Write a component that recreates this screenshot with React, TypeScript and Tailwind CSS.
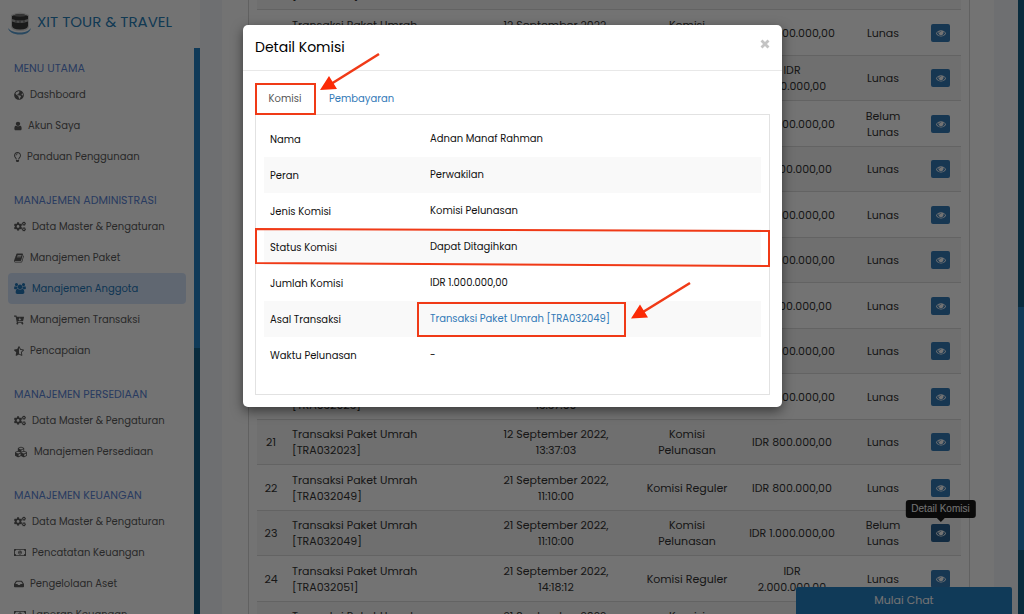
import React from "react";
import {
  FaCartArrowDown,
  FaCogs,
  FaCubes,
  FaGlobeAmericas,
  FaInbox,
  FaRegLightbulb,
  FaRegMoneyBillAlt,
  FaStarHalfAlt,
} from "react-icons/fa";

type IconProps = { className?: string };

function UserIcon({ className }: IconProps) {
  return (
    <svg viewBox="192 64 1408 1664" className={className} fill="currentColor" aria-hidden="true">
      <path d="M1536 1399q0 109-62.5 187t-150.5 78h-854q-88 0-150.5-78t-62.5-187q0-85 8.5-160.5t31.5-152 58.5-131 94-89 134.5-34.5q131 128 313 128t313-128q76 0 134.5 34.5t94 89 58.5 131 31.5 152 8.5 160.5zm-256-887q0 159-112.5 271.5t-271.5 112.5-271.5-112.5-112.5-271.5 112.5-271.5 271.5-112.5 271.5 112.5 112.5 271.5z" />
    </svg>
  );
}

function GroupIcon({ className }: IconProps) {
  return (
    <svg viewBox="-64 0 1920 1792" className={className} fill="currentColor" aria-hidden="true">
      <path d="M529 896q-162 5-265 128h-134q-82 0-138-40.5t-56-118.5q0-353 124-353 6 0 43.5 21t97.5 42.5 119 21.5q67 0 133-23-5 37-5 66 0 139 81 256zm1071 637q0 120-73 189.5t-194 69.5h-874q-121 0-194-69.5t-73-189.5q0-53 3.5-103.5t14-109 26.5-108.500 43-97.500 62-81 85.5-53.500 111.5-20q10 0 43 21.500t73 48 107 48 135 21.500 135-21.500 107-48 73-48 43-21.500q61 0 111.500 20t85.500 53.500 62 81 43 97.500 26.500 108.500 14 109 3.500 103.500zm-1024-1277q0 106-75 181t-181 75-181-75-75-181 75-181 181-75 181 75 75 181zm704 384q0 159-112.500 271.500t-271.500 112.500-271.500-112.500-112.500-271.500 112.500-271.500 271.500-112.500 271.500 112.500 112.500 271.500zm576 225q0 78-56 118.500t-138 40.500h-134q-103-123-265-128 81-117 81-256 0-29-5-66 66 23 133 23 59 0 119-21.500t97.500-42.500 43.500-21q124 0 124 353zm-128-609q0 106-75 181t-181 75-181-75-75-181 75-181 181-75 181 75 75 181z" />
    </svg>
  );
}

function BookIcon({ className }: IconProps) {
  return (
    <svg viewBox="60 64 1680 1664" className={className} fill="currentColor" aria-hidden="true">
      <path d="M1703 478q40 57 18 129l-275 906q-19 64-76.5 107.5t-122.5 43.5h-923q-77 0-148.5-53.5t-99.5-131.5q-24-67-2-127 0-4 3-27t4-37q1-8-3-21.5t-3-19.5q2-11 8-21t16.5-23.5 16.500-23.5q23-38 45-91.5t30-91.5q3-10 .5-30t-.5-28q3-11 17-28t17-23q21-36 42-92t25-90q1-9-2.5-32t.5-28q4-13 22-30.5t22-22.5q19-26 42.5-84.500t27.5-96.5q1-8-3-25.5t-2-26.5q2-8 9-18t18-23 17-21q8-12 16.5-30.500t15-35 16-36 19.5-32 26.500-23.500 36-11.500 47.500 5.500l-1 3q38-9 51-9h761q74 0 114 56t18 130l-274 906q-36 119-71.500 153.500t-128.500 34.500h-869q-27 0-38 15-11 16-1 43 24 70 144 70h923q29 0 56-15.500t35-41.500l300-987q7-22 5-57 38 15 59 43zm-1064 2q-4 13 2 22.500t20 9.500h608q13 0 25.500-9.500t16.500-22.500l21-64q4-13-2-22.500t-20-9.500h-608q-13 0-25.500 9.500t-16.500 22.500zm-83 256q-4 13 2 22.500t20 9.500h608q13 0 25.500-9.500t16.500-22.500l21-64q4-13-2-22.500t-20-9.500h-608q-13 0-25.500 9.500t-16.500 22.500z" />
    </svg>
  );
}

function EyeIcon({ className }: IconProps) {
  return (
    <svg viewBox="0 0 1792 1792" className={className} fill="currentColor" aria-hidden="true">
      <path d="M1664 960q-152-236-381-353 61 104 61 225 0 185-131.5 316.5t-316.5 131.5-316.5-131.5-131.5-316.5q0-121 61-225-229 117-381 353 133 205 333.5 326.5t434.5 121.5 434.5-121.5 333.5-326.5zm-720-384q0-20-14-34t-34-14q-125 0-214.5 89.5t-89.5 214.5q0 20 14 34t34 14 34-14 14-34q0-86 61-147t147-61q20 0 34-14t14-34zm848 384q0 34-20 69-140 230-376.5 368.5t-499.5 138.5-499.5-139-376.5-368q-20-35-20-69t20-69q140-229 376.5-368t499.5-139 499.5 139 376.5 368q20 35 20 69z" />
    </svg>
  );
}

function Logo() {
  return (
    <svg viewBox="0 0 24 24" className="size-6 shrink-0" aria-hidden="true">
      <path d="M3 4Q12 -1 21 4V16Q20 20 12 20T3 16Z" fill="#d8d8d8" />
      <path d="M0 17C1 21 5 23.500 12 23.500S22 21 23 17C20 20.500 17 21.500 12 21.500S3 20.500 0 17Z" fill="#5a9fd4" />
      <path d="M4 5Q12 1 20 5V14.500Q20 18.500 12 18.500T4 14.500Z" fill="#3a3a3a" />
      <path d="M5 4.500Q12 1.500 19 4.500Q12 7 5 4.500Z" fill="#777" />
      <path d="M4 8Q12 11 20 8V10.500Q12 13.500 4 10.500Z" fill="#a8a8a8" />
      <path d="M8 9.300V11.700M12 10V12.300M16 9.300V11.700" stroke="#555" strokeWidth="1" />
    </svg>
  );
}

type MenuItem = { label: string; icon: React.ComponentType<IconProps>; size: string; active?: boolean };

const WIDE = "h-[11px] w-3";
const MID = "size-[10px]";

const sections: { title: string; items: MenuItem[] }[] = [
  {
    title: "MENU UTAMA",
    items: [
      { label: "Dashboard", icon: FaGlobeAmericas, size: MID },
      { label: "Akun Saya", icon: UserIcon, size: "h-[10px] w-2" },
      { label: "Panduan Penggunaan", icon: FaRegLightbulb, size: "h-[10px] w-[7px]" },
    ],
  },
  {
    title: "MANAJEMEN ADMINISTRASI",
    items: [
      { label: "Data Master & Pengaturan", icon: FaCogs, size: WIDE },
      { label: "Manajemen Paket", icon: BookIcon, size: MID },
      { label: "Manajemen Anggota", icon: GroupIcon, size: WIDE, active: true },
      { label: "Manajemen Transaksi", icon: FaCartArrowDown, size: MID },
      { label: "Pencapaian", icon: FaStarHalfAlt, size: MID },
    ],
  },
  {
    title: "MANAJEMEN PERSEDIAAN",
    items: [
      { label: "Data Master & Pengaturan", icon: FaCogs, size: WIDE },
      { label: "Manajemen Persediaan", icon: FaCubes, size: "h-3 w-[14px]" },
    ],
  },
  {
    title: "MANAJEMEN KEUANGAN",
    items: [
      { label: "Data Master & Pengaturan", icon: FaCogs, size: WIDE },
      { label: "Pencatatan Keuangan", icon: FaRegMoneyBillAlt, size: WIDE },
      { label: "Pengelolaan Aset", icon: FaInbox, size: MID },
      { label: "Laporan Keuangan", icon: FaRegMoneyBillAlt, size: WIDE },
    ],
  },
];

type Row = {
  no: number;
  code: string;
  date: string;
  time: string;
  type: string[];
  amount: string[];
  status: string[];
};

const PEL = ["Komisi", "Pelunasan"];
const REG = ["Komisi Reguler"];
const M1 = ["IDR 1.000.000,00"];
const M8 = ["IDR 800.000,00"];
const M2 = ["IDR", "2.000.000,00"];
const LUNAS = ["Lunas"];
const BELUM = ["Belum", "Lunas"];
const D12 = "12 September 2022,";
const D21 = "21 September 2022,";

const rows: Row[] = [
  { no: 11, code: "TRA032019", date: D12, time: "13:37:00", type: REG, amount: M1, status: LUNAS },
  { no: 12, code: "TRA032020", date: D12, time: "13:37:00", type: PEL, amount: M1, status: LUNAS },
  { no: 13, code: "TRA032020", date: D12, time: "13:37:00", type: REG, amount: M2, status: LUNAS },
  { no: 14, code: "TRA032021", date: D12, time: "13:37:00", type: PEL, amount: M1, status: BELUM },
  { no: 15, code: "TRA032021", date: D12, time: "13:37:00", type: REG, amount: M8, status: LUNAS },
  { no: 16, code: "TRA032021", date: D12, time: "13:37:00", type: PEL, amount: M1, status: LUNAS },
  { no: 17, code: "TRA032022", date: D12, time: "13:37:00", type: REG, amount: M1, status: LUNAS },
  { no: 18, code: "TRA032022", date: D12, time: "13:37:00", type: PEL, amount: M8, status: LUNAS },
  { no: 19, code: "TRA032022", date: D12, time: "13:37:00", type: REG, amount: M1, status: LUNAS },
  { no: 20, code: "TRA032023", date: D12, time: "13:37:00", type: REG, amount: M1, status: LUNAS },
  { no: 21, code: "TRA032023", date: D12, time: "13:37:03", type: PEL, amount: M8, status: LUNAS },
  { no: 22, code: "TRA032049", date: D21, time: "11:10:00", type: REG, amount: M8, status: LUNAS },
  { no: 23, code: "TRA032049", date: D21, time: "11:10:00", type: PEL, amount: M1, status: BELUM },
  { no: 24, code: "TRA032051", date: D21, time: "14:18:12", type: REG, amount: M2, status: LUNAS },
  { no: 25, code: "TRA032051", date: D21, time: "14:18:12", type: PEL, amount: M1, status: LUNAS },
];

function Lines({ lines }: { lines: string[] }) {
  return (
    <>
      {lines.map((line) => (
        <span key={line} className="block whitespace-nowrap">
          {line}
        </span>
      ))}
    </>
  );
}

function Sidebar() {
  return (
    <aside className="flex h-full w-[200px] shrink-0 flex-col bg-white">
      <a href="#beranda" className="flex h-12 shrink-0 items-center gap-[5px] pb-[3px] pl-2 text-[15px] whitespace-nowrap text-[#2980b9]">
        <Logo />
        XIT TOUR &amp; TRAVEL
      </a>
      <div className="flex min-h-0 flex-1">
        <nav className="min-w-0 flex-1 overflow-hidden pr-2 pl-2">
          {sections.map((section) => (
            <section key={section.title} className="pt-5 first:pt-3">
              <h2 className="mb-[3px] pl-[6px] text-[11px] leading-4 whitespace-nowrap text-[#5b84d6]">{section.title}</h2>
              <ul>
                {section.items.map((item) => (
                  <li key={item.label}>
                    <a
                      href="#menu"
                      className={
                        "flex h-[31px] items-center gap-[6px] rounded pl-[6px] text-[10px] whitespace-nowrap " +
                        (item.active ? "bg-[#d5e5fb] text-[#2276b8]" : "text-[#5c5c5c]")
                      }
                    >
                      <item.icon className={item.size + " shrink-0"} />
                      {item.label}
                    </a>
                  </li>
                ))}
              </ul>
            </section>
          ))}
        </nav>
        <div className="w-[6px] shrink-0 bg-[#155f88]">
          <div className="h-[300px] bg-[#2580c3]" />
        </div>
      </div>
    </aside>
  );
}

function CommissionTable() {
  return (
    <table className="w-full table-fixed border-collapse text-center text-[11px] leading-4 text-[#333]">
      <colgroup>
        <col className="w-7" />
        <col />
        <col className="w-40" />
        <col className="w-[102px]" />
        <col className="w-[108px]" />
        <col className="w-[74px]" />
        <col className="w-[41px]" />
      </colgroup>
      <tbody>
        {rows.map((row) => (
          <tr key={row.no} className="h-[46px] border-t border-[#dcdcdc] odd:h-[45px] odd:bg-[#f6f6f6]">
            <td>{row.no}</td>
            <td className="py-[6px] pl-[7px] text-left">
              <Lines lines={["Transaksi Paket Umrah", "[" + row.code + "]"]} />
            </td>
            <td>
              <Lines lines={[row.date, row.time]} />
            </td>
            <td>
              <Lines lines={row.type} />
            </td>
            <td>
              <Lines lines={row.amount} />
            </td>
            <td>
              <Lines lines={row.status} />
            </td>
            <td>
              <div className="relative mx-auto w-[19px]">
                <button
                  type="button"
                  aria-label="Detail Komisi"
                  className={
                    "flex h-[18px] w-[19px] items-center justify-center rounded-[2px] text-white " +
                    (row.no === 23 ? "bg-[#286090]" : "bg-[#337ab7]")
                  }
                >
                  <EyeIcon className="size-[10px]" />
                </button>
                {row.no === 23 && (
                  <div
                    role="tooltip"
                    className="absolute bottom-full left-1/2 mb-[6px] -translate-x-1/2 rounded-[3px] bg-black/90 px-[6px] font-['Liberation_Sans',Arial,sans-serif] text-[10px] leading-[18px] whitespace-nowrap text-white"
                  >
                    Detail Komisi
                    <svg viewBox="0 0 8 4" className="absolute top-full left-1/2 h-1 w-2 -translate-x-1/2" aria-hidden="true">
                      <path d="M0 0H8L4 4Z" fill="#000" fillOpacity="0.9" />
                    </svg>
                  </div>
                )}
              </div>
            </td>
          </tr>
        ))}
      </tbody>
    </table>
  );
}

const details: [string, string][] = [
  ["Nama", "Adnan Manaf Rahman"],
  ["Peran", "Perwakilan"],
  ["Jenis Komisi", "Komisi Pelunasan"],
  ["Status Komisi", "Dapat Ditagihkan"],
  ["Jumlah Komisi", "IDR 1.000.000,00"],
  ["Asal Transaksi", "Transaksi Paket Umrah [TRA032049]"],
  ["Waktu Pelunasan", "-"],
];

function Annotations() {
  return (
    <svg viewBox="0 0 539 382" className="pointer-events-none absolute top-0 left-0 h-[382px] w-[539px]" fill="none" stroke="#f03a17" strokeWidth="2" aria-hidden="true">
      <path d="M13 59H72V89H13Z" />
      <path d="M13 204L526 206V241L13 238Z" />
      <path d="M175 278H382V311H175Z" />
      <path d="M136 29L88 59M447 258L400 287" strokeWidth="2.600" />
      <path d="M77 65L86 51L94 64ZM388 293.500L397 279.500L405 292.500Z" fill="#fb2a06" stroke="none" />
    </svg>
  );
}

function DetailDialog() {
  return (
    <div role="dialog" aria-modal="true" aria-labelledby="judul" className="relative w-full max-w-[539px] rounded-[5px] bg-white text-[#111] shadow-[0_4px_12px_rgba(0,0,0,0.5)]">
      <header className="flex h-[46px] items-center justify-between border-b border-[#e8e8e8] px-3">
        <h1 id="judul" className="text-[14px] text-black">
          Detail Komisi
        </h1>
        <button type="button" aria-label="Tutup" className="mb-2 text-[#c4c4c4]">
          <svg viewBox="0 0 10 10" className="size-[10px]" aria-hidden="true">
            <path d="M1.500 1.500L8.500 8.500M8.500 1.500L1.500 8.500" stroke="currentColor" strokeWidth="2.800" />
          </svg>
        </button>
      </header>
      <div className="p-3">
        <div role="tablist" className="flex h-[31px] text-[10px]">
          <button type="button" role="tab" aria-selected="true" className="w-[60px] text-center text-[#555]">
            Komisi
          </button>
          <button type="button" role="tab" aria-selected="false" className="px-[14px] text-[#337ab7]">
            Pembayaran
          </button>
        </div>
        <div role="tabpanel" className="border border-[#e2e2e2] px-2 pt-[6px] pb-[21px]">
          <table className="w-full table-fixed border-collapse text-left text-[10px] leading-4">
            <colgroup>
              <col className="w-40" />
              <col />
            </colgroup>
            <tbody>
              {details.map(([label, value]) => (
                <tr key={label} className="h-9 even:bg-[#f9f9f9]">
                  <th scope="row" className="pt-[2px] pl-[6px] font-normal">
                    {label}
                  </th>
                  <td className="pl-[6px]">
                    {label === "Asal Transaksi" ? (
                      <a href="#transaksi" className="text-[#337ab7]">
                        {value}
                      </a>
                    ) : (
                      value
                    )}
                  </td>
                </tr>
              ))}
            </tbody>
          </table>
        </div>
      </div>
      <Annotations />
    </div>
  );
}

export default function App() {
  return (
    <div className="relative flex h-screen overflow-hidden bg-[#f4f6fa] font-[Poppins,Inter,sans-serif]">
      <Sidebar />
      <main className="min-w-0 flex-1 overflow-hidden pr-6 pl-[22px]">
        <div className="-mt-9 bg-white pr-6 pl-[26px]">
          <div className="border-x border-[#d8d8d8] px-2">
            <CommissionTable />
          </div>
        </div>
      </main>
      <div className="flex w-[6px] shrink-0 flex-col bg-[#155f88]">
        <div className="h-1/2" />
        <div className="h-[243px] bg-[#2580c3]" />
      </div>
      <button type="button" className="absolute right-3 bottom-0 h-[27px] w-[216px] rounded-t-[2px] bg-[#2580c3] text-[11px] text-white">
        Mulai Chat
      </button>
      <div className="absolute inset-0 flex items-start justify-center bg-black/55 pt-[25px] pl-px">
        <DetailDialog />
      </div>
    </div>
  );
}
